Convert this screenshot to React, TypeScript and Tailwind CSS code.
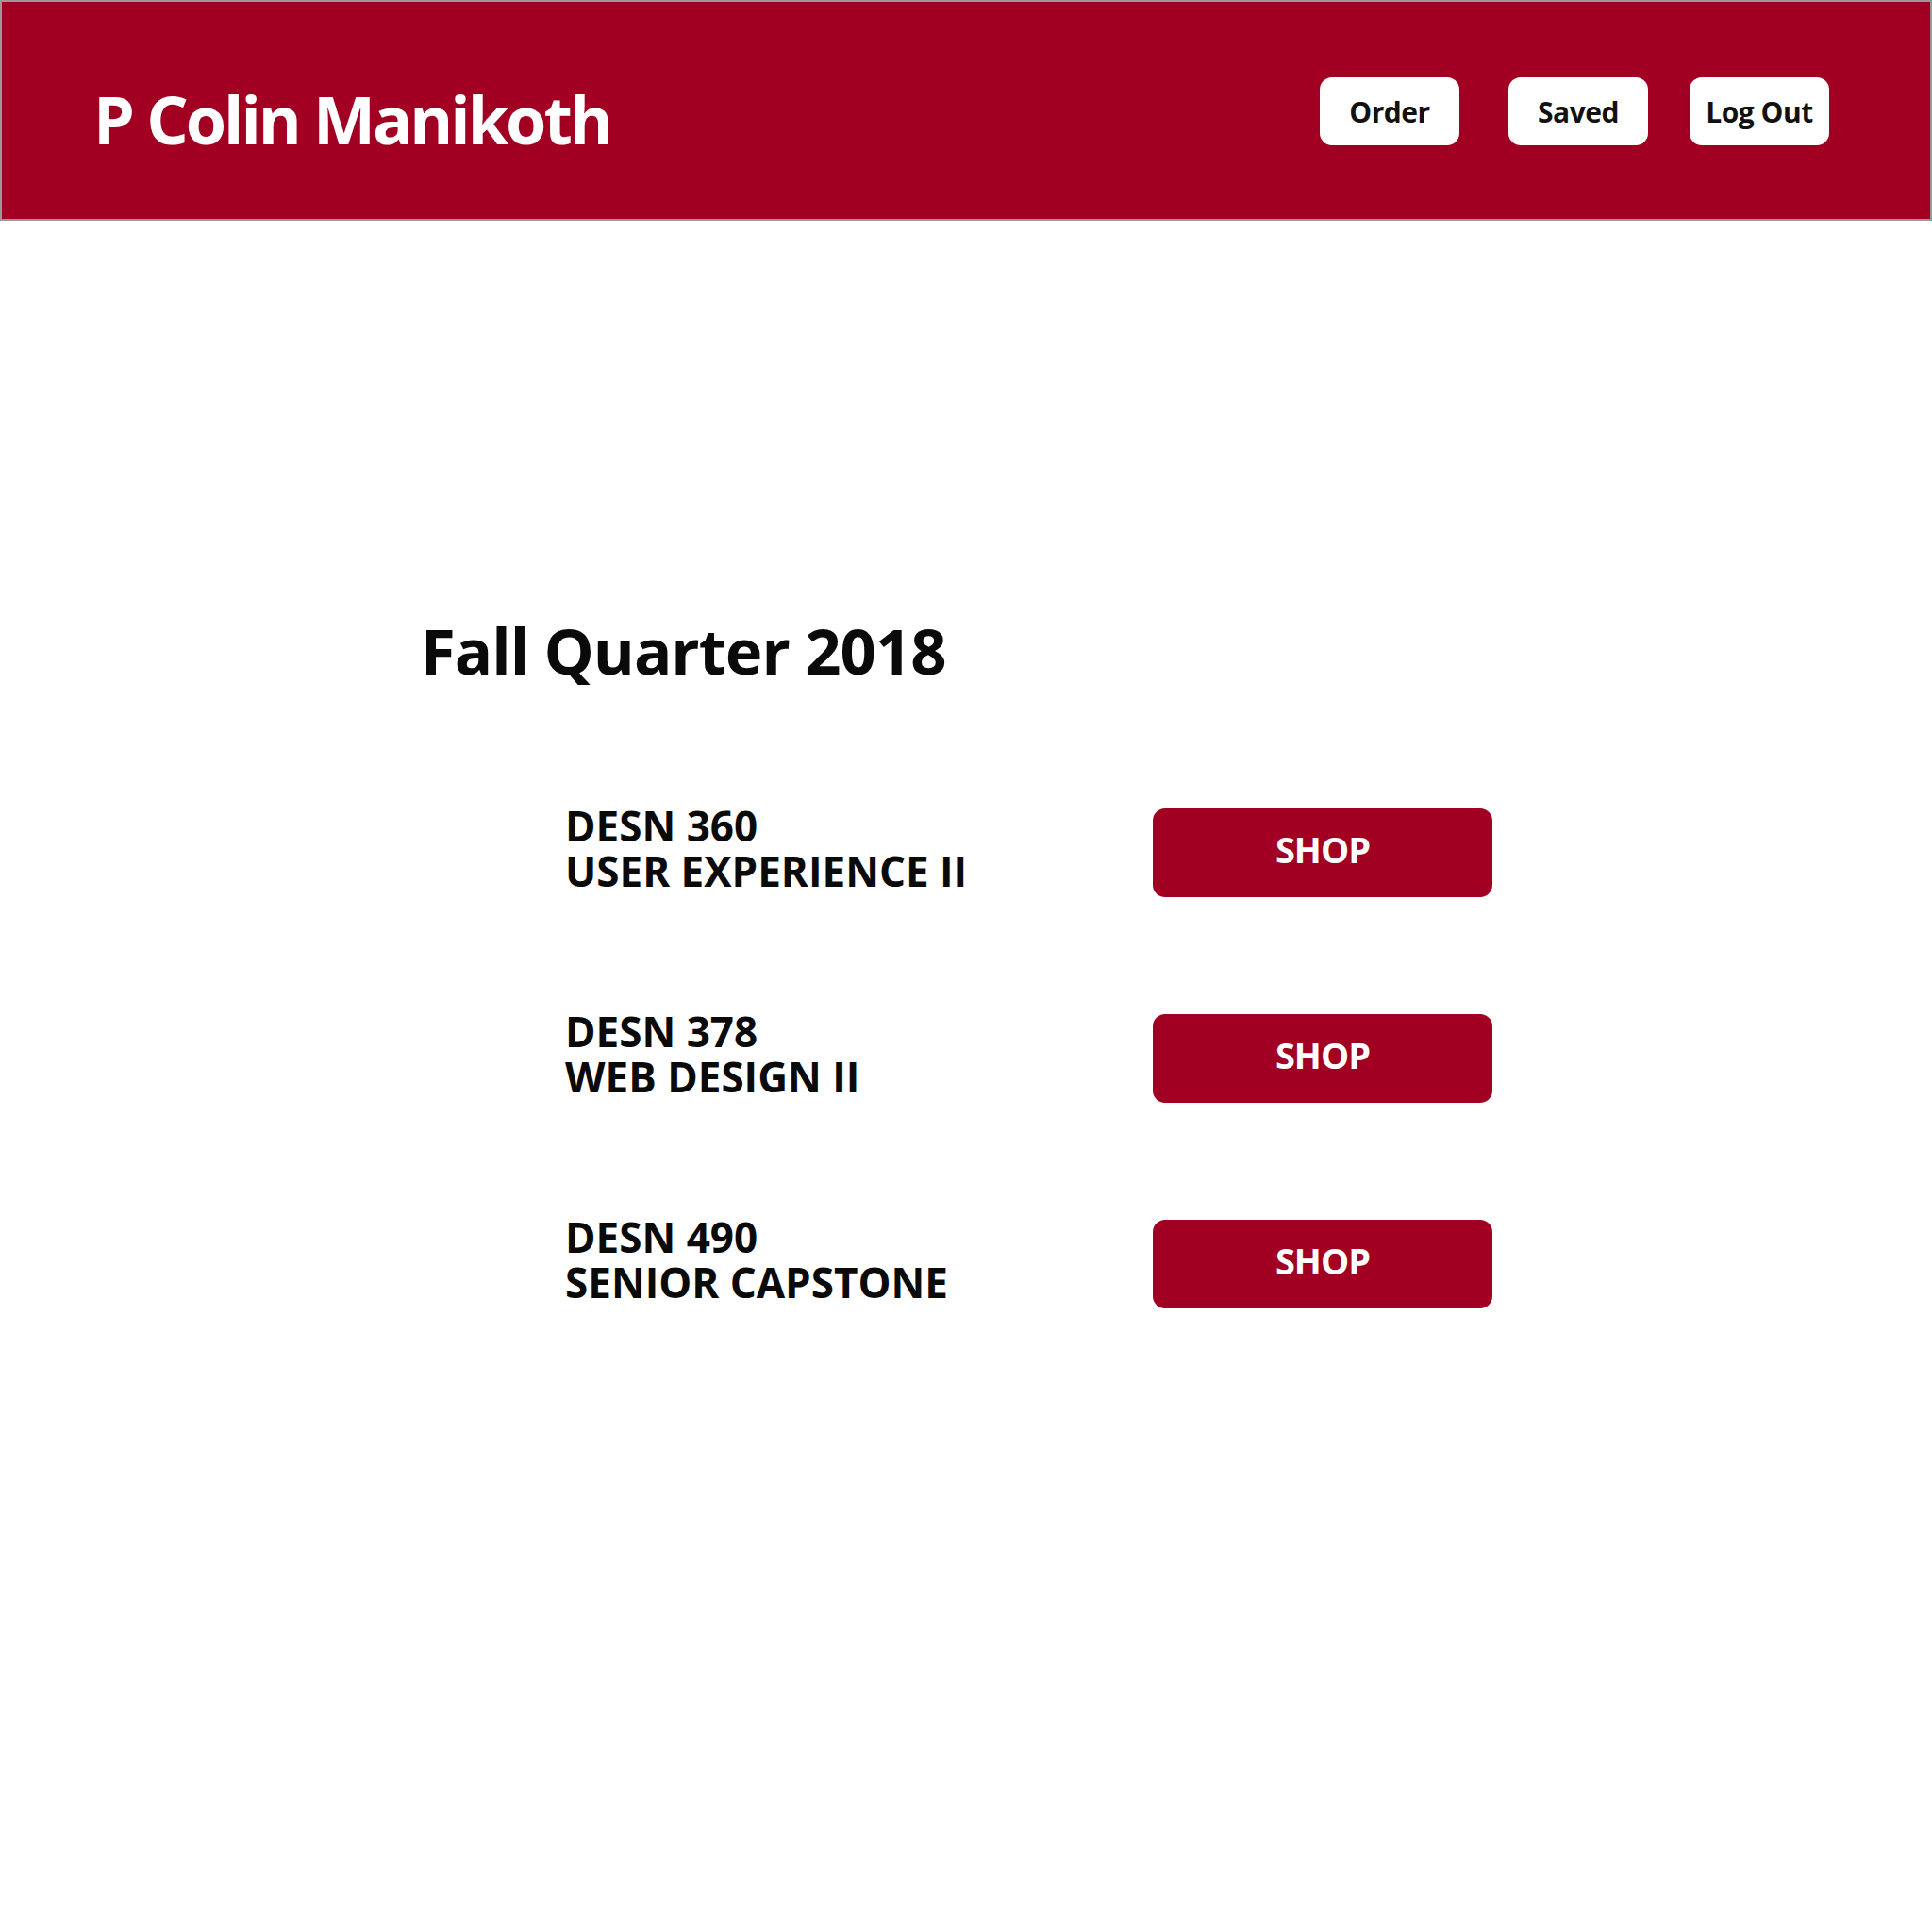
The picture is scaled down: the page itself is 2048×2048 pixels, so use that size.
import React from 'react';

const courses = [
  { code: 'DESN 360', name: 'USER EXPERIENCE II' },
  { code: 'DESN 378', name: 'WEB DESIGN II' },
  { code: 'DESN 490', name: 'SENIOR CAPSTONE' },
];

const font = { fontFamily: '"Open Sans", "Liberation Sans", sans-serif' };

const App = () => {
  return (
    <div className="w-[2048px] h-[2048px] bg-white" style={font}>
      <header className="h-[234px] bg-[#a10022] border-2 border-[#999999] flex justify-between">
        <h1 className="pl-[97px] pt-[89px] text-[70px] leading-[70px] font-bold text-white tracking-[-3px]">
          P Colin Manikoth
        </h1>
        <nav className="flex items-start pt-[80px] pr-[107px]">
          <button className="w-[148px] h-[72px] rounded-[13px] bg-white text-[30px] font-bold text-[#111] tracking-[-0.5px]">
            Order
          </button>
          <button className="ml-[52px] w-[148px] h-[72px] rounded-[13px] bg-white text-[30px] font-bold text-[#111] tracking-[-0.5px]">
            Saved
          </button>
          <button className="ml-[44px] w-[148px] h-[72px] rounded-[13px] bg-white text-[30px] font-bold text-[#111] tracking-[-0.5px]">
            Log Out
          </button>
        </nav>
      </header>

      <main className="pl-[446px] pt-[422px]">
        <h2 className="text-[67px] leading-[67px] font-bold text-[#0a0a0a] tracking-[-1px]">Fall Quarter 2018</h2>

        <div className="pl-[153px] pt-[128px] space-y-[118px]">
          {courses.map((course, index) => (
            <div key={index} className="flex items-start">
              <p className="w-[623px] text-[44px] leading-[48px] font-bold text-[#0a0a0a]">
                {course.code}
                <br />
                {course.name}
              </p>
              <button className="mt-[6px] w-[360px] h-[94px] pb-[8px] rounded-[13px] bg-[#a10022] text-white text-[38px] font-bold tracking-[-1px]">
                SHOP
              </button>
            </div>
          ))}
        </div>
      </main>
    </div>
  );
};

export default App;
